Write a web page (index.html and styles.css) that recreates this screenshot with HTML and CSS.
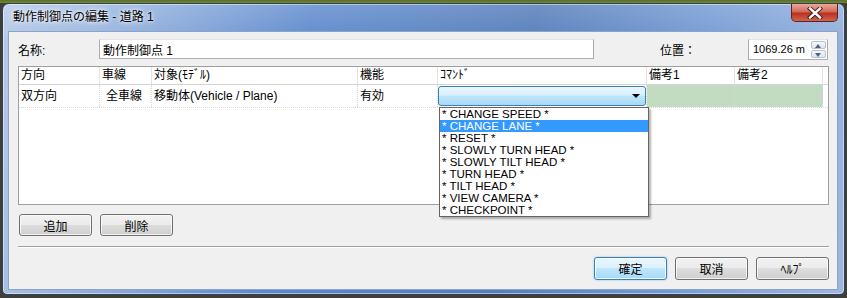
FILE: index.html
```html
<!DOCTYPE html>
<html lang="ja">
<head>
  <meta charset="UTF-8">
  <title>動作制御点の編集 - 道路 1</title>
  <link rel="stylesheet" href="styles.css">
</head>
<body>
  <div class="window">
    <div class="titlebar">
      <span class="title">動作制御点の編集 - 道路 1</span>
      <div class="close">
        <svg width="16" height="12" viewBox="0 0 16 12">
          <path d="M3 1.5 L13 10.5 M13 1.5 L3 10.5" stroke="#3a1a16" stroke-width="4.2" stroke-linecap="square"/>
          <path d="M3 1.5 L13 10.5 M13 1.5 L3 10.5" stroke="#ffffff" stroke-width="2.4" stroke-linecap="square"/>
        </svg>
      </div>
    </div>

    <div class="client">
      <div class="name-row">
        <span class="name-label">名称:</span>
        <div class="textbox name-box">動作制御点 1</div>
        <span class="pos-label">位置：</span>
        <div class="textbox spin">
          <span class="spin-value">1069.26 m</span>
          <div class="spin-btns">
            <span class="spin-up"></span>
            <span class="spin-down"></span>
          </div>
        </div>
      </div>

      <div class="grid">
        <div class="grid-row head">
          <div class="cell">方向</div>
          <div class="cell">車線</div>
          <div class="cell">対象(ﾓﾃﾞﾙ)</div>
          <div class="cell">機能</div>
          <div class="cell">ｺﾏﾝﾄﾞ</div>
          <div class="cell">備考1</div>
          <div class="cell">備考2</div>
          <div class="cell"></div>
        </div>
        <div class="grid-row data">
          <div class="cell">双方向</div>
          <div class="cell lane">全車線</div>
          <div class="cell">移動体(Vehicle / Plane)</div>
          <div class="cell">有効</div>
          <div class="cell combo-cell">
            <div class="combo"><span class="combo-arrow"></span></div>
          </div>
          <div class="cell note"></div>
          <div class="cell note"></div>
          <div class="cell"></div>
        </div>

        <ul class="dropdown">
          <li>* CHANGE SPEED *</li>
          <li class="selected">* CHANGE LANE *</li>
          <li>* RESET *</li>
          <li>* SLOWLY TURN HEAD *</li>
          <li>* SLOWLY TILT HEAD *</li>
          <li>* TURN HEAD *</li>
          <li>* TILT HEAD *</li>
          <li>* VIEW CAMERA *</li>
          <li>* CHECKPOINT *</li>
        </ul>
      </div>

      <div class="edit-buttons">
        <button class="btn">追加</button>
        <button class="btn">削除</button>
      </div>

      <div class="separator"></div>

      <div class="dialog-buttons">
        <button class="btn default">確定</button>
        <button class="btn">取消</button>
        <button class="btn">ﾍﾙﾌﾟ</button>
      </div>
    </div>
  </div>
</body>
</html>
```

FILE: styles.css
```css
body {
  margin: 0;
  width: 847px;
  height: 298px;
  overflow: hidden;
  background: linear-gradient(#5d6b2c 0, #6f8a2e 3px, #3e4038 3px);
  font-family: "Liberation Sans", "Noto Sans CJK JP", sans-serif;
  font-size: 12px;
  color: #000;
}
.window {
  margin: 3px 0 0 2px;
  width: 830px;
  height: 286px;
  border: 1px solid #30425e;
  border-radius: 7px 7px 5px 5px;
  background:
    linear-gradient(100deg, rgba(255,255,255,0.55), rgba(255,255,255,0.25) 20%, rgba(255,255,255,0) 35%, rgba(0,0,0,0.08) 60%, rgba(255,255,255,0.15) 80%, rgba(255,255,255,0.4)),
    linear-gradient(to bottom, #7a9fd6, #5f8acb 40px, #5d88cb);
  box-shadow: inset 0 0 0 1px rgba(255,255,255,0.45);
  padding: 0 6px 4px 5px;
  display: flex;
  flex-direction: column;
}
.titlebar {
  height: 27px;
  display: flex;
  justify-content: space-between;
  align-items: flex-start;
}
.title {
  margin: 6px 0 0 5px;
  line-height: 14px;
  font-size: 12px;
  color: #000;
  text-shadow: 0 0 6px #fff, 0 0 3px #fff;
}
.close {
  width: 45px;
  height: 17px;
  margin-right: 0;
  border: 1px solid #5c2520;
  border-top: none;
  border-radius: 0 0 5px 5px;
  background: linear-gradient(#e9a99c, #d2695a 45%, #b8321f 55%, #cf6550);
  display: flex;
  justify-content: center;
  align-items: center;
}
.client {
  flex: 1;
  border: 1px solid #8aa3c9;
  background: #f0f0f0;
  padding: 7px 8px 0 9px;
  display: flex;
  flex-direction: column;
}

/* name row */
.name-row {
  display: flex;
  align-items: center;
  height: 20px;
}
.name-label {
  width: 81px;
}
.textbox {
  height: 20px;
  box-sizing: border-box;
  border: 1px solid #abadb3;
  border-top-color: #e2e3ea;
  background: #fff;
  display: flex;
  align-items: center;
}
.name-box {
  width: 495px;
  padding-left: 3px;
}
.pos-label {
  margin-left: 66px;
  width: 88px;
}
.spin {
  width: 80px;
  height: 21px;
  padding-left: 4px;
  justify-content: space-between;
  font-size: 11px;
}
.spin-btns {
  width: 15px;
  height: 17px;
  margin-right: 1px;
  display: flex;
  flex-direction: column;
  gap: 1px;
}
.spin-btns span {
  flex: 1;
  border: 1px solid #b9c3cf;
  border-radius: 2px;
  background: linear-gradient(#f4f6f9, #dfe5ec);
  position: relative;
}
.spin-btns span::after {
  content: "";
  position: absolute;
  left: 3px;
  border-left: 3.5px solid transparent;
  border-right: 3.5px solid transparent;
}
.spin-up::after {
  top: 2px;
  border-bottom: 4px solid #4d6185;
}
.spin-down::after {
  top: 2px;
  border-top: 4px solid #4d6185;
}

/* grid */
.grid {
  position: relative;
  margin-top: 7px;
  height: 139px;
  box-sizing: border-box;
  border: 1px solid #a0a0a0;
  background: #fff;
}
.grid-row {
  display: grid;
  grid-template-columns: 81px 52px 206px 80px 209px 88px 88px 1fr;
}
.grid-row.head {
  height: 17px;
  border-bottom: 1px solid #d5d5d5;
}
.grid-row.head .cell {
  border-right: 1px solid #e3e3e3;
  line-height: 17px;
  padding-left: 2px;
}
.grid-row.data {
  height: 22px;
  border-bottom: 1px dotted #d8d8d8;
}
.grid-row.data .cell {
  border-right: 1px dotted #d8d8d8;
  line-height: 22px;
  padding-left: 2px;
}
.grid-row .cell:last-child {
  border-right: none;
}
.grid-row.data .lane {
  padding-left: 6px;
}
.grid-row.data .note {
  background: #c2dcc2;
}
.grid-row.data .combo-cell {
  padding: 1px 0 0 0;
}
.combo {
  height: 20px;
  box-sizing: border-box;
  border: 1px solid #3c7fb1;
  border-radius: 3px;
  background: linear-gradient(#eaf6fd, #d9f0fc 45%, #bee6fd 50%, #a7d9f5);
  position: relative;
}
.combo-arrow {
  position: absolute;
  right: 5px;
  top: 7px;
  border-left: 4px solid transparent;
  border-right: 4px solid transparent;
  border-top: 4px solid #000;
}
.dropdown {
  position: absolute;
  left: 420px;
  top: 40px;
  width: 210px;
  height: 110px;
  box-sizing: border-box;
  margin: 0;
  padding: 0;
  list-style: none;
  border: 1px solid #646464;
  background: #fff;
  box-shadow: 2px 2px 2px rgba(0,0,0,0.3);
  font-size: 11.5px;
}
.dropdown li {
  height: 12px;
  line-height: 12px;
  padding-left: 2px;
}
.dropdown li.selected {
  background: #3399ff;
  color: #fff;
}

/* buttons */
.edit-buttons {
  display: flex;
  gap: 8px;
  margin: 9px 0 0 1px;
}
.btn {
  width: 73px;
  height: 22px;
  padding: 0;
  border: 1px solid #707070;
  border-radius: 3px;
  background: linear-gradient(#f2f2f2, #ebebeb 50%, #dddddd 50%, #cfcfcf);
  box-shadow: inset 0 0 0 1px rgba(255,255,255,0.7);
  font-family: "Liberation Sans", "Noto Sans CJK JP", sans-serif;
  font-size: 12px;
  color: #000;
}
.btn.default {
  border-color: #3c7fb1;
  background: linear-gradient(#eaf6fd, #d9f0fc 50%, #bee6fd 50%, #a7d9f5);
  box-shadow: inset 0 0 0 1px rgba(255,255,255,0.8), 0 0 2px #6ac0f0;
}
.separator {
  margin: 10px 0 0 0;
  height: 1px;
  background: #a0a0a0;
  border-bottom: 1px solid #fff;
}
.dialog-buttons {
  display: flex;
  justify-content: flex-end;
  gap: 8px;
  margin-top: 9px;
}
.dialog-buttons .btn {
  height: 23px;
}
```
